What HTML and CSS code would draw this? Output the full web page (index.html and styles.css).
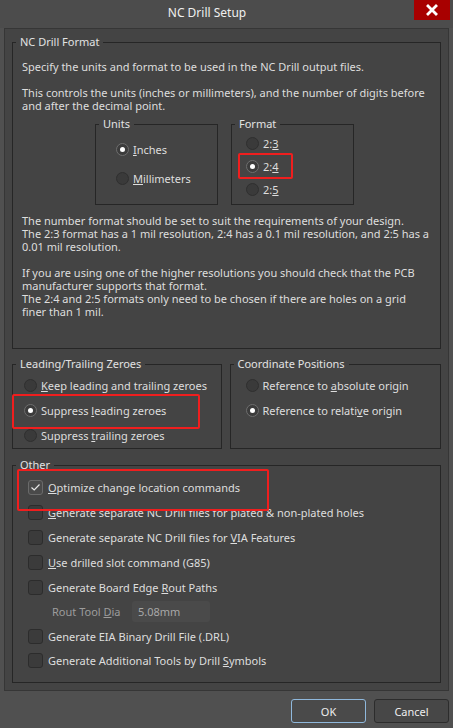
FILE: index.html
```html
<!DOCTYPE html>
<html>
<head>
<meta charset="utf-8">
<title>NC Drill Setup</title>
<link rel="stylesheet" href="styles.css">
</head>
<body>
<div class="window">
  <div class="titlebar">
    <div class="title">NC Drill Setup</div>
    <div class="close"><svg width="12" height="12" viewBox="0 0 12 12"><path d="M2 2 L10 10 M10 2 L2 10" stroke="#fff" stroke-width="2.8" stroke-linecap="square"/></svg></div>
  </div>
  <div class="panel">
    <fieldset class="group nc">
      <legend>NC Drill Format</legend>
      <div class="nc-body">
        <p class="p1">Specify the units and format to be used in the NC Drill output files.</p>
        <p class="p2">This controls the units (inches or millimeters), and the number of digits before<br>and after the decimal point.</p>
        <div class="subrow">
          <fieldset class="group sub">
            <legend>Units</legend>
            <div class="inner units">
              <div class="radio r-units on"><span class="dot"></span><span><u>I</u>nches</span></div>
              <div class="radio r-units second"><span class="dot"></span><span><u>M</u>illimeters</span></div>
            </div>
          </fieldset>
          <fieldset class="group sub">
            <legend>Format</legend>
            <div class="inner format">
              <div class="radio r-fmt"><span class="dot"></span><span>2:<u>3</u></span></div>
              <div class="radio r-fmt on"><span class="dot"></span><span>2:<u>4</u></span></div>
              <div class="radio r-fmt"><span class="dot"></span><span>2:<u>5</u></span></div>
            </div>
          </fieldset>
        </div>
        <p class="p3">The number format should be set to suit the requirements of your design.<br>The 2:3 format has a 1 mil resolution, 2:4 has a 0.1 mil resolution, and 2:5 has a<br>0.01 mil resolution.</p>
        <p class="p4">If you are using one of the higher resolutions you should check that the PCB<br>manufacturer supports that format.<br>The 2:4 and 2:5 formats only need to be chosen if there are holes on a grid<br>finer than 1 mil.</p>
      </div>
    </fieldset>
    <div class="row2">
      <fieldset class="group zeroes">
        <legend>Leading/Trailing Zeroes</legend>
        <div class="inner zeroes-in">
          <div class="radio r-row"><span class="dot"></span><span><u>K</u>eep leading and trailing zeroes</span></div>
          <div class="radio r-row on"><span class="dot"></span><span>Suppress <u>l</u>eading zeroes</span></div>
          <div class="radio r-row"><span class="dot"></span><span>Suppress <u>t</u>railing zeroes</span></div>
        </div>
      </fieldset>
      <fieldset class="group coords">
        <legend>Coordinate Positions</legend>
        <div class="inner coords-in">
          <div class="radio r-row"><span class="dot"></span><span>Reference to <u>a</u>bsolute origin</span></div>
          <div class="radio r-row on"><span class="dot"></span><span>Reference to relati<u>v</u>e origin</span></div>
        </div>
      </fieldset>
    </div>
    <fieldset class="group other">
      <legend>Other</legend>
      <div class="inner other-in">
        <div class="check on"><span class="box"><svg width="11" height="9" viewBox="0 0 11 9"><path d="M1.5 4.5 L4.2 7 L9.5 1.5" fill="none" stroke="#e8e8e8" stroke-width="1.2"/></svg></span><span><u>O</u>ptimize change location commands</span></div>
        <div class="check"><span class="box"></span><span><u>G</u>enerate separate NC Drill files for plated &amp; non-plated holes</span></div>
        <div class="check"><span class="box"></span><span>Generate separate NC Drill files for <u>V</u>IA Features</span></div>
        <div class="check"><span class="box"></span><span><u>U</u>se drilled slot command (G85)</span></div>
        <div class="check"><span class="box"></span><span>Generate Board Edge <u>R</u>out Paths</span></div>
        <div class="rout"><span class="rout-label">Rout Tool <u>D</u>ia</span><span class="rout-input">5.08mm</span></div>
        <div class="check"><span class="box"></span><span>Generate EIA Binary Drill File (.DRL)</span></div>
        <div class="check last"><span class="box"></span><span>Generate Additional Tools by Drill <u>S</u>ymbols</span></div>
      </div>
    </fieldset>
  </div>
  <div class="footer">
    <button class="btn ok">OK</button>
    <button class="btn">Cancel</button>
  </div>
  <div class="mark m1"></div>
  <div class="mark m2"></div>
  <div class="mark m3"></div>
</div>
</body>
</html>
```
FILE: styles.css
```css
* { box-sizing: border-box; }
html, body { margin: 0; padding: 0; }
body {
  width: 453px;
  height: 728px;
  background: #505050;
  font-family: "Noto Sans", "Open Sans", sans-serif;
  font-size: 11px;
  color: #dedede;
  overflow: hidden;
}
.window {
  position: relative;
  width: 453px;
  height: 728px;
  background: #505050;
}
.titlebar {
  height: 28px;
  display: flex;
  align-items: flex-start;
  background: #4c4c4c;
}
.title {
  flex: 1;
  text-align: center;
  font-size: 12px;
  line-height: 26px;
  color: #f0f0f0;
}
.close {
  width: 36px;
  height: 20px;
  margin-right: 3px;
  background: #a80000;
  display: flex;
  align-items: center;
  justify-content: center;
}
.panel {
  margin: 0 4px;
  height: 663px;
  background: #444444;
  border: 1px solid #363636;
  padding: 5px 7px 0 7px;
}
.group {
  margin: 0;
  padding: 0;
  border: 1px solid #262626;
  min-width: 0;
}
.group > legend {
  margin-left: 3px;
  padding: 0 4px;
  line-height: 16px;
  font-size: 11px;
  color: #e2e2e2;
}
p {
  margin: 0;
  line-height: 13px;
  white-space: nowrap;
}
.nc-body { padding: 0 0 30px 9px; }
.p1 { padding-top: 10px; }
.p2 { margin-top: 13px; }
.subrow {
  display: flex;
  gap: 13px;
  margin: 4px 0 0 73px;
}
.sub { width: 123px; height: 89px; }
.sub > legend { margin-left: 3px; }
.units { padding: 7px 0 0 20px; }
.format { padding: 0 0 0 14px; }
.p3 { margin-top: 9px; }
.p4 { margin-top: 13px; }

.radio {
  display: flex;
  align-items: center;
  white-space: nowrap;
}
.dot {
  flex: none;
  width: 13px;
  height: 13px;
  border-radius: 50%;
  background: #3a3a3a;
  border: 1px solid #2f2f2f;
  margin-right: 4px;
  display: flex;
  align-items: center;
  justify-content: center;
}
.radio.on .dot {
  border-color: #6e6e6e;
  background: #3c3c3c;
}
.radio.on .dot::after {
  content: "";
  width: 5px;
  height: 5px;
  border-radius: 50%;
  background: #ffffff;
}
.r-units { height: 20px; }
.r-units.second { margin-top: 9px; }
.r-fmt { height: 23px; }
.r-row { height: 25px; }

.row2 {
  display: flex;
  gap: 8px;
  margin-top: 7px;
}
.zeroes { width: 210px; height: 93px; }
.coords { width: 212px; height: 93px; }
.zeroes-in { padding: 1px 0 0 11px; }
.coords-in { padding: 1px 0 0 15px; }

.other {
  margin-top: 8px;
  height: 226px;
}
.other-in { padding: 1.5px 0 0 15px; }
.check {
  height: 25px;
  display: flex;
  align-items: center;
  white-space: nowrap;
}
.box {
  flex: none;
  width: 15px;
  height: 15px;
  border-radius: 3px;
  background: #3b3b3b;
  border: 1px solid #2c2c2c;
  margin-right: 5px;
  display: flex;
  align-items: center;
  justify-content: center;
}
.check.on .box {
  background: #4a4a4a;
  border-color: #6a6a6a;
}
.rout {
  height: 24px;
  display: flex;
  align-items: center;
  padding-left: 24px;
}
.rout-label {
  color: #9c9c9c;
  width: 80px;
}
.rout-input {
  width: 78px;
  height: 21px;
  border-radius: 3px;
  background: #4a4a4a;
  color: #a8a8a8;
  line-height: 21px;
  padding-left: 6px;
}
.check.last { height: 23px; }

.footer {
  display: flex;
  justify-content: flex-end;
  gap: 8px;
  padding: 8px 4px 0 0;
}
.btn {
  width: 75px;
  height: 24px;
  border-radius: 3px;
  border: 1px solid #2c2c2c;
  background: #474747;
  color: #eeeeee;
  font-family: "Noto Sans", "Open Sans", sans-serif;
  font-size: 11px;
  padding: 0;
}
.btn.ok { border-color: #8fb8dc; background: #4a4a4a; }

/* red annotation boxes drawn over the dialog */
.mark {
  position: absolute;
  border: 2px solid #f01e1e;
  border-radius: 2px;
}
.m1 { left: 238px; top: 153px; width: 55px; height: 26px; }
.m2 { left: 12px; top: 394px; width: 188px; height: 35px; }
.m3 { left: 17px; top: 469px; width: 252px; height: 42px; }
```
